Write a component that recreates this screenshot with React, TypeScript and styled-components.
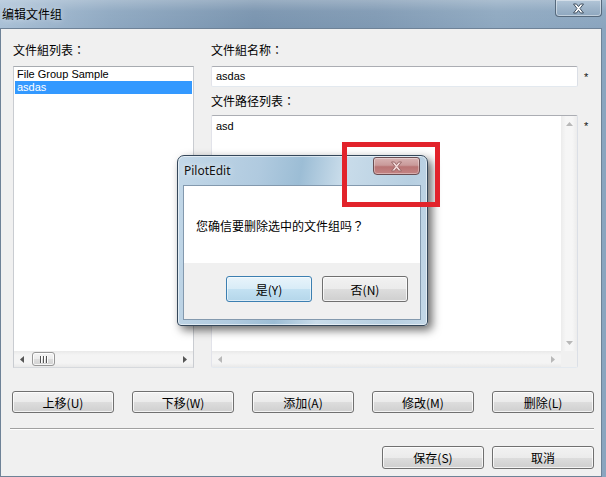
import React from "react";
import styled, { createGlobalStyle } from "styled-components";

const GlobalStyle = createGlobalStyle`
  html, body {
    margin: 0;
    padding: 0;
  }
  body {
    width: 606px;
    height: 477px;
    overflow: hidden;
    font-family: "Noto Sans CJK SC", "Noto Sans", sans-serif;
    font-size: 12px;
    color: #000;
  }
`;

const cjk = `"Noto Sans CJK SC", "Liberation Sans", sans-serif`;
const latin = `"Liberation Sans", "Noto Sans CJK SC", sans-serif`;

// ---------- main window chrome ----------

const Window = styled.div`
  position: relative;
  width: 606px;
  height: 477px;
  display: flex;
  flex-direction: column;
  overflow: hidden;
  background: linear-gradient(90deg, #a9c0d6 0%, #8ea8c1 18%, #7893ae 42%, #7f99b3 62%, #8ea8c0 82%, #8aa5bf 100%);
`;

const TitleBar = styled.div`
  height: 28px;
  display: flex;
  align-items: flex-start;
  justify-content: space-between;
  background: linear-gradient(180deg, rgba(255, 255, 255, 0.25) 0%, rgba(255, 255, 255, 0.05) 40%, rgba(0, 0, 0, 0) 100%);
`;

const TitleText = styled.div`
  padding: 6px 0 0 2px;
  line-height: 16px;
  font-family: ${cjk};
  font-size: 12px;
  color: #000;
  text-shadow: 0 0 6px rgba(255, 255, 255, 0.7);
`;

const CloseBox = styled.div`
  width: 47px;
  height: 17px;
  margin-right: 4px;
  box-sizing: border-box;
  border: 1px solid #56697c;
  border-top: none;
  border-radius: 0 0 4px 4px;
  background: linear-gradient(180deg, #b3c6d8 0%, #9fb5ca 50%, #8ea7bf 100%);
  box-shadow: inset 0 0 0 1px rgba(255, 255, 255, 0.45);
  display: flex;
  align-items: center;
  justify-content: center;
`;

const Client = styled.div`
  flex: 1;
  margin-right: 4px;
  box-sizing: border-box;
  border: 1px solid #6e8297;
  background: #f0f0f0;
  display: flex;
  flex-direction: column;
`;

const Main = styled.div`
  display: flex;
  padding: 13px 0 0 12px;
`;

const LeftPane = styled.div`
  width: 181px;
  display: flex;
  flex-direction: column;
`;

const RightPane = styled.div`
  margin-left: 17px;
  display: flex;
  flex-direction: column;
`;

const Label = styled.div<{ $gap: number }>`
  height: 16px;
  line-height: 16px;
  margin-bottom: ${(p) => p.$gap}px;
  font-family: ${cjk};
  font-size: 12px;
  white-space: nowrap;
`;

// full-width punctuation sits centred in its cell, as in the Windows font
const Punct = styled.span`
  font-family: "Noto Sans CJK TC", "Noto Sans CJK SC", sans-serif;
`;

const FieldRow = styled.div<{ $gap?: number }>`
  display: flex;
  align-items: flex-start;
  margin-bottom: ${(p) => p.$gap ?? 0}px;
`;

const Star = styled.span<{ $top: number }>`
  margin: ${(p) => p.$top}px 0 0 6px;
  font-family: ${latin};
  font-size: 11px;
  line-height: 10px;
  color: #111;
`;

const TextInput = styled.div`
  width: 367px;
  height: 21px;
  box-sizing: border-box;
  border: 1px solid #abadb3;
  border-color: #abadb3 #dbdfe6 #e3e9ef #e2e3ea;
  border-radius: 2px;
  background: #fff;
  padding: 0 4px;
  line-height: 19px;
  font-family: ${latin};
  font-size: 11px;
`;

// ---------- list box ----------

const ListBox = styled.div`
  height: 302px;
  box-sizing: border-box;
  border: 1px solid #abadb3;
  border-color: #a7abb0 #c9ccd1 #d6d9dd #c9ccd1;
  background: #fff;
  display: flex;
  flex-direction: column;
`;

const ListItems = styled.div`
  flex: 1;
  padding: 1px;
`;

const ListItem = styled.div<{ $selected?: boolean }>`
  height: 13px;
  line-height: 13px;
  padding-left: 2px;
  font-family: ${latin};
  font-size: 11px;
  white-space: nowrap;
  background: ${(p) => (p.$selected ? "#3399ff" : "transparent")};
  color: ${(p) => (p.$selected ? "#fff" : "#000")};
`;

// ---------- text area with scroll bars ----------

const TextArea = styled.div`
  width: 367px;
  height: 253px;
  box-sizing: border-box;
  border: 1px solid #abadb3;
  border-color: #abadb3 #dbdfe6 #e3e9ef #e2e3ea;
  border-radius: 2px;
  background: #fff;
  display: grid;
  grid-template-columns: 1fr 16px;
  grid-template-rows: 1fr 16px;
`;

const AreaText = styled.div`
  padding: 3px 4px;
  line-height: 14px;
  font-family: ${latin};
  font-size: 11px;
`;

const VScroll = styled.div`
  display: flex;
  flex-direction: column;
  justify-content: space-between;
  background: linear-gradient(90deg, #ececec 0%, #f6f6f6 30%, #f6f6f6 70%, #ececec 100%);
`;

const HScroll = styled.div`
  height: 16px;
  display: flex;
  align-items: stretch;
  justify-content: space-between;
  background: linear-gradient(180deg, #e9e9e9 0%, #f4f4f4 25%, #f4f4f4 75%, #e9e9e9 100%);
`;

const Corner = styled.div`
  background: #f0f0f0;
`;

const ArrowCell = styled.div`
  width: 16px;
  height: 16px;
  flex: none;
  display: flex;
  align-items: center;
  justify-content: center;
`;

const Thumb = styled.div`
  width: 23px;
  margin: 1px 0 1px 2px;
  box-sizing: border-box;
  border: 1px solid #979797;
  border-radius: 3px;
  background: linear-gradient(180deg, #f4f4f4 0%, #ececec 50%, #dedede 51%, #d2d2d2 100%);
  box-shadow: inset 0 0 0 1px rgba(255, 255, 255, 0.8);
  display: flex;
  align-items: center;
  justify-content: center;
`;

const Track = styled.div`
  flex: 1;
`;

// ---------- buttons ----------

const ButtonRow = styled.div`
  display: flex;
  gap: 18px;
  margin-top: 23px;
  padding-left: 11px;
`;

const Separator = styled.div`
  margin: 15px 7px 0 9px;
  border-top: 1px solid #a0a0a0;
  border-bottom: 1px solid #ffffff;
`;

const Footer = styled.div`
  display: flex;
  justify-content: flex-end;
  gap: 8px;
  margin-top: 16px;
  padding-right: 7px;
`;

const Button = styled.div<{ $w?: number; $h?: number; $focused?: boolean }>`
  width: ${(p) => p.$w ?? 102}px;
  height: ${(p) => p.$h ?? 22}px;
  box-sizing: border-box;
  border: 1px solid ${(p) => (p.$focused ? "#3c7fb1" : "#707070")};
  border-radius: 3px;
  background: ${(p) =>
    p.$focused
      ? "linear-gradient(180deg, #e8f4fb 0%, #d8ecf7 50%, #c3e1f2 51%, #b4d6ea 100%)"
      : "linear-gradient(180deg, #f2f2f2 0%, #ebebeb 50%, #dddddd 51%, #cfcfcf 100%)"};
  box-shadow: inset 0 0 0 1px ${(p) => (p.$focused ? "rgba(255,255,255,0.55)" : "rgba(255,255,255,0.75)")};
  display: flex;
  align-items: center;
  justify-content: center;
  font-family: ${cjk};
  font-size: 12px;
  color: #000;
  white-space: nowrap;
`;

// ---------- message box overlay ----------

const Dialog = styled.div`
  position: absolute;
  left: 177px;
  top: 155px;
  width: 251px;
  height: 171px;
  box-sizing: border-box;
  border: 1px solid #34475a;
  border-radius: 7px 7px 4px 4px;
  background: linear-gradient(100deg, #c3d8e8 0%, #b0cadf 30%, #9cbdd5 45%, #c9dcea 60%, #b7cfe1 85%, #c3d7e7 100%);
  box-shadow: 4px 4px 10px rgba(0, 0, 0, 0.6), inset 0 0 0 1px rgba(255, 255, 255, 0.55);
  display: flex;
  flex-direction: column;
`;

const DialogTitleRow = styled.div`
  height: 29px;
  display: flex;
  align-items: flex-start;
  justify-content: space-between;
`;

const DialogTitle = styled.div`
  padding: 7px 0 0 6px;
  line-height: 16px;
  font-family: "Noto Sans", "Liberation Sans", sans-serif;
  font-size: 12px;
  color: #111;
  text-shadow: 0 0 6px rgba(255, 255, 255, 0.9);
`;

const DialogClose = styled.div`
  width: 47px;
  height: 18px;
  margin: 1px 7px 0 0;
  box-sizing: border-box;
  border: 1px solid #6a4e53;
  border-radius: 3px 3px 4px 4px;
  background: linear-gradient(180deg, #d8b3b3 0%, #c99a9a 45%, #b87474 55%, #c48484 100%);
  box-shadow: inset 0 0 0 1px rgba(255, 255, 255, 0.35);
  display: flex;
  align-items: center;
  justify-content: center;
`;

const DialogClient = styled.div`
  flex: 1;
  margin: 0 6px 5px 5px;
  box-sizing: border-box;
  border: 1px solid #8399ae;
  display: flex;
  flex-direction: column;
`;

const Message = styled.div`
  height: 77px;
  box-sizing: border-box;
  padding: 32px 0 0 12px;
  background: #fff;
  line-height: 16px;
  font-family: ${cjk};
  font-size: 12px;
`;

const DialogButtons = styled.div`
  flex: 1;
  background: #f0f0f0;
  display: flex;
  justify-content: flex-end;
  align-items: flex-start;
  gap: 10px;
  padding: 13px 12px 0 0;
`;

const Highlight = styled.div`
  position: absolute;
  left: 342px;
  top: 142px;
  width: 98px;
  height: 65px;
  box-sizing: border-box;
  border: 5px solid #e2232b;
`;

// ---------- small drawings ----------

type Dir = "up" | "down" | "left" | "right";

const Arrow = ({ dir, color }: { dir: Dir; color: string }) => {
  const pts: Record<Dir, string> = {
    up: "0,4 3.5,0 7,4",
    down: "0,0 7,0 3.5,4",
    left: "4,0 4,7 0,3.5",
    right: "0,0 0,7 4,3.5",
  };
  const vertical = dir === "up" || dir === "down";
  return (
    <svg width={vertical ? 7 : 4} height={vertical ? 4 : 7} viewBox={vertical ? "0 0 7 4" : "0 0 4 7"}>
      <polygon points={pts[dir]} fill={color} />
    </svg>
  );
};

const Grip = () => (
  <svg width="8" height="7" viewBox="0 0 8 7">
    {[0, 3, 6].map((x) => (
      <g key={x}>
        <rect x={x} y="0" width="1" height="7" fill="#555" />
        <rect x={x + 1} y="0" width="1" height="7" fill="#fff" />
      </g>
    ))}
  </svg>
);

const CloseGlyph = ({ fill, stroke }: { fill: string; stroke: string }) => (
  <svg width="13" height="11" viewBox="0 0 13 11">
    <path
      d="M1.5 1 L4.5 1 L6.5 3.6 L8.5 1 L11.5 1 L8 5.5 L11.5 10 L8.5 10 L6.5 7.4 L4.5 10 L1.5 10 L5 5.5 Z"
      fill={fill}
      stroke={stroke}
      strokeWidth="1"
      strokeLinejoin="round"
    />
  </svg>
);

// ---------- page ----------

const moveButtons = ["上移(U)", "下移(W)", "添加(A)", "修改(M)", "删除(L)"];

const App = () => {
  return (
    <>
      <GlobalStyle />
      <Window>
        <TitleBar>
          <TitleText>编辑文件组</TitleText>
          <CloseBox>
            <CloseGlyph fill="#ffffff" stroke="#3f4f60" />
          </CloseBox>
        </TitleBar>

        <Client>
          <Main>
            <LeftPane>
              <Label $gap={8}>
                文件組列表<Punct>：</Punct>
              </Label>
              <ListBox>
                <ListItems>
                  <ListItem>File Group Sample</ListItem>
                  <ListItem $selected>asdas</ListItem>
                </ListItems>
                <HScroll>
                  <ArrowCell>
                    <Arrow dir="left" color="#555" />
                  </ArrowCell>
                  <Thumb>
                    <Grip />
                  </Thumb>
                  <Track />
                  <ArrowCell>
                    <Arrow dir="right" color="#555" />
                  </ArrowCell>
                </HScroll>
              </ListBox>
            </LeftPane>

            <RightPane>
              <Label $gap={8}>
                文件組名称<Punct>：</Punct>
              </Label>
              <FieldRow $gap={6}>
                <TextInput>asdas</TextInput>
                <Star $top={6}>*</Star>
              </FieldRow>
              <Label $gap={6}>
                文件路径列表<Punct>：</Punct>
              </Label>
              <FieldRow>
                <TextArea>
                  <AreaText>asd</AreaText>
                  <VScroll>
                    <ArrowCell>
                      <Arrow dir="up" color="#b8b8b8" />
                    </ArrowCell>
                    <ArrowCell>
                      <Arrow dir="down" color="#b8b8b8" />
                    </ArrowCell>
                  </VScroll>
                  <HScroll>
                    <ArrowCell>
                      <Arrow dir="left" color="#b8b8b8" />
                    </ArrowCell>
                    <ArrowCell>
                      <Arrow dir="right" color="#b8b8b8" />
                    </ArrowCell>
                  </HScroll>
                  <Corner />
                </TextArea>
                <Star $top={6}>*</Star>
              </FieldRow>
            </RightPane>
          </Main>

          <ButtonRow>
            {moveButtons.map((label) => (
              <Button key={label}>{label}</Button>
            ))}
          </ButtonRow>

          <Separator />

          <Footer>
            <Button $h={23}>保存(S)</Button>
            <Button $h={23}>取消</Button>
          </Footer>
        </Client>

        <Dialog>
          <DialogTitleRow>
            <DialogTitle>PilotEdit</DialogTitle>
            <DialogClose>
              <CloseGlyph fill="#f1d6d6" stroke="#9a6a6a" />
            </DialogClose>
          </DialogTitleRow>
          <DialogClient>
            <Message>
              您确信要删除选中的文件组吗<Punct>？</Punct>
            </Message>
            <DialogButtons>
              <Button $w={86} $h={26} $focused>
                是(Y)
              </Button>
              <Button $w={86} $h={26}>
                否(N)
              </Button>
            </DialogButtons>
          </DialogClient>
        </Dialog>

        <Highlight />
      </Window>
    </>
  );
};

export default App;
